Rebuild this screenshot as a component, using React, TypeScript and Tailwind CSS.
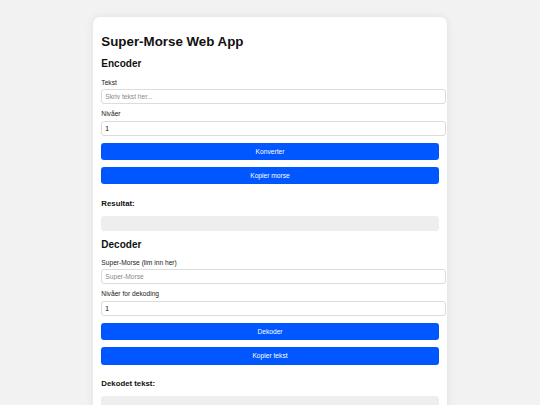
type FieldProps = {
  label: string;
  placeholder?: string;
  value?: string;
  first?: boolean;
};

function Field({ label, placeholder, value, first }: FieldProps) {
  return (
    <div className={first ? "mt-[8.6px]" : "mt-[6.3px]"}>
      <label className="block text-[6.67px] leading-[7.7px] text-[#1a1a1a]">
        {label}
      </label>
      <input
        className="mt-[3px] box-border block h-[14.8px] w-[345px] rounded-[3px] border border-[#dcdcdc] bg-white px-[3px] text-[6.67px] text-black placeholder:text-[#8a8a8a] outline-none"
        placeholder={placeholder}
        defaultValue={value}
      />
    </div>
  );
}

function BlueButton({ children, first }: { children: string; first?: boolean }) {
  return (
    <button
      className={`${first ? "mt-[7px]" : "mt-[6.7px]"} block h-[17.5px] w-full rounded-[3px] bg-[#0057ff] text-[6.67px] text-white`}
    >
      {children}
    </button>
  );
}

function Section({
  title,
  fields,
  buttons,
  resultLabel,
}: {
  title: string;
  fields: FieldProps[];
  buttons: string[];
  resultLabel: string;
}) {
  return (
    <section>
      <h2 className="text-[10px] leading-[11.5px] font-bold text-[#111]">{title}</h2>
      {fields.map((f, i) => (
        <Field key={f.label} {...f} first={i === 0} />
      ))}
      {buttons.map((b, i) => (
        <BlueButton key={b} first={i === 0}>
          {b}
        </BlueButton>
      ))}
      <h3 className="mt-[14.2px] text-[7.8px] leading-[9px] font-bold text-[#111]">
        {resultLabel}
      </h3>
      <div className="mt-[8.4px] h-[14.8px] w-full rounded-[3px] bg-[#eeeeee]" />
    </section>
  );
}

export default function App() {
  return (
    <div className="min-h-screen bg-[#f2f2f2] pt-[17px] font-['Liberation_Sans',Arial,sans-serif]">
      <div className="mx-auto w-[354px] rounded-[7px] bg-white px-[8.33px] pt-[8.33px] pb-[10px] shadow-[0_0_8px_rgba(0,0,0,0.08)]">
        <h1 className="mt-[8.9px] text-[13.33px] leading-[15.3px] font-bold text-[#111]">
          Super-Morse Web App
        </h1>
        <div className="mt-[8.9px]">
          <Section
            title="Encoder"
            fields={[
              { label: "Tekst", placeholder: "Skriv tekst her..." },
              { label: "Nivåer", value: "1" },
            ]}
            buttons={["Konverter", "Kopier morse"]}
            resultLabel="Resultat:"
          />
        </div>
        <div className="mt-[7.7px]">
          <Section
            title="Decoder"
            fields={[
              { label: "Super-Morse (lim inn her)", placeholder: "Super-Morse" },
              { label: "Nivåer for dekoding", value: "1" },
            ]}
            buttons={["Dekoder", "Kopier tekst"]}
            resultLabel="Dekodet tekst:"
          />
        </div>
      </div>
    </div>
  );
}
